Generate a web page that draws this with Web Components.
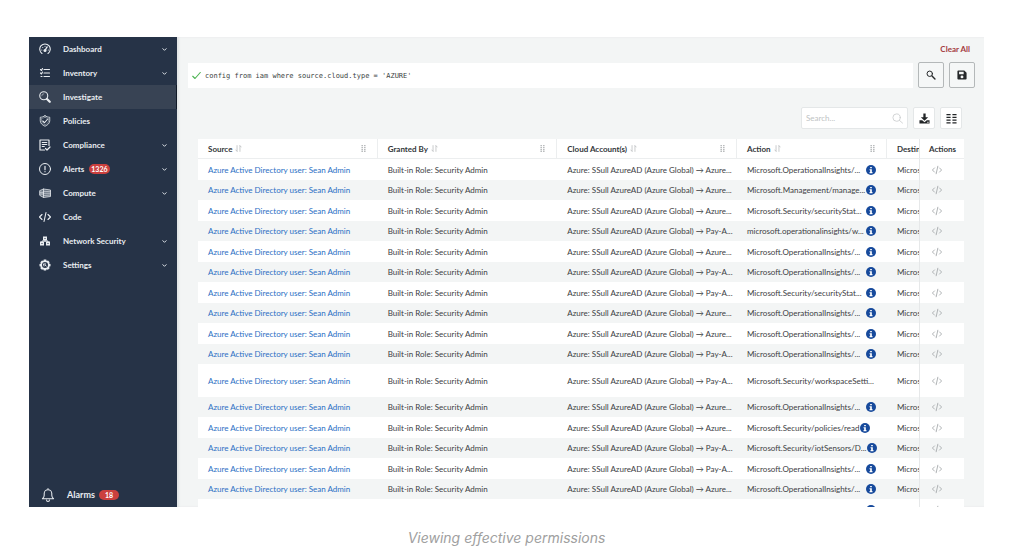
<!DOCTYPE html>
<html lang="en">
<head>
<meta charset="utf-8">
<title>Investigate</title>
<style>
    body {
        margin: 0;
        background: #fff;
        font-family: Lato, "Liberation Sans", sans-serif;
        font-size: 8px;
        color: #3c4043;
    }
</style>
</head>
<body>
<doc-figure>
    <app-shell>
        <side-nav slot="nav">
            <nav-item icon="gauge" more>Dashboard</nav-item>
            <nav-item icon="list" more>Inventory</nav-item>
            <nav-item icon="lens" active>Investigate</nav-item>
            <nav-item icon="shield">Policies</nav-item>
            <nav-item icon="report" more>Compliance</nav-item>
            <nav-item icon="alert" badge="1326" more>Alerts</nav-item>
            <nav-item icon="compute" more>Compute</nav-item>
            <nav-item icon="code">Code</nav-item>
            <nav-item icon="network" more>Network Security</nav-item>
            <nav-item icon="gear" more>Settings</nav-item>
            <nav-item slot="bottom" icon="bell" badge="18" large>Alarms</nav-item>
        </side-nav>
        <query-bar value="config from iam where source.cloud.type = 'AZURE'"></query-bar>
        <table-tools></table-tools>
        <access-table></access-table>
    </app-shell>
    <span slot="caption">Viewing effective permissions</span>
</doc-figure>

<script>
const line = 'fill="none" stroke="currentColor" stroke-linecap="round" stroke-linejoin="round"';

const icons = {
    gauge: `<g ${line} stroke-width="2.2"><path d="M6 21a10.500 10.500 0 1 1 12 0"/><path d="M12 15l4-7" stroke-width="3"/><path d="M5.500 14h.1M7.500 9h.1M12 6.500h.1M18.500 14h.1"/></g><circle cx="12" cy="15" r="3" fill="currentColor"/>`,
    list: `<g ${line} stroke-width="2.200"><path d="M10 5h11M10 12h11M10 19h11M3 5l2 2 2-4M3 12l2 2 2-4"/><path d="M4 19h2"/></g>`,
    lens: `<g ${line}><circle cx="9.500" cy="9.500" r="8" stroke-width="2.200"/><path d="M5.500 9.500a4 4 0 0 1 4-4" stroke-width="1"/><path d="M16 16l5.500 5.500" stroke-width="4.400"/></g>`,
    shield: `<g ${line} stroke-width="1.600"><path d="M12 1.500c3 2 6 2.800 9.500 3v7c0 5-4 8.500-9.500 11-5.500-2.500-9.500-6-9.500-11v-7c3.500-.2 6.500-1 9.500-3z"/><path d="M12 4.500c2.500 1.500 4.500 2 7 2.300v5c0 3.500-3 6-7 8-4-2-7-4.500-7-8v-5c2.500-.3 4.500-.8 7-2.300z" stroke-width=".8"/><path d="M7.500 12l3.500 3.500 6-7" stroke-width="2.200"/></g>`,
    report: `<g ${line} stroke-width="2.400"><path d="M11 22H2V2h18v11"/><path d="M6.500 7h9M6.500 11h9M6.500 15h4"/><path d="M13 19l3 3 6-6"/></g>`,
    alert: `<g ${line} stroke-width="2"><circle cx="12" cy="12" r="11"/><path d="M12 6.500v7M12 17v.3" stroke-width="2.400"/></g>`,
    compute: `<path d="M2 7l7-3 14 2v13l-14 2-7-4z" fill="currentColor" opacity=".35"/><g ${line} stroke-width="1.500"><path d="M2 7l7-3 14 2v13l-14 2-7-4zM9 4v17M2 10.500h7M2 14h7"/><path d="M9 8.500l14 1M9 12.500h14M9 17l14-1" stroke-width="1.200"/></g>`,
    code: `<g ${line} stroke-width="2.200"><path d="M6 7l-5 5 5 5M18 7l5 5-5 5M14 3l-4 18"/></g>`,
    network: `<g fill="currentColor"><path d="M8 3h8v8H8zM2 13h8v8H2zM14 13h8v8h-8z"/></g><path d="M12 11v2M6 14v-2h12v2" ${line} stroke-width="2"/><path d="M11 6h2v2h-2zM5 16h2v2H5zM17 16h2v2h-2z" fill="#263347"/>`,
    gear: `<path fill="currentColor" fill-rule="evenodd" d="M9.500 1h5l.8 3 2.800-1 3.200 3.500-1.300 2.700 3 .8v4.500l-3 1 1.300 3-3.500 3.200-2.700-1.300-.9 2.600h-4.600l-1-2.700-2.700 1.300-3.300-3.300 1.300-2.800-2.900-1V10l3-.8-1.300-2.700L6 3l2.700 1.100zM12 6a6 6 0 1 0 0 12 6 6 0 0 0 0-12z"/><path d="M12 8.500V12l2.500 2M9 10l1 4" ${line} stroke-width="2"/>`,
    bell: `<g ${line} stroke-width="1.800"><path d="M2.500 18.500c2-1.500 3-3.500 3-6V9.500a6.500 6.500 0 0 1 13 0v3c0 2.500 1 4.500 3 6zM12 1v2M9.500 20.500a2.500 2.500 0 0 0 5 0"/></g>`,
    chevron: `<path d="M4 8l8 8 8-8" ${line} stroke-width="4.500"/>`,
    check: `<path d="M2 14l6 6L22 4" ${line} stroke-width="3"/>`,
    search: `<g ${line}><circle cx="9" cy="9" r="6.500" stroke-width="2.400"/><path d="M14.500 14.500l7 7" stroke-width="3.400"/></g>`,
    find: `<g ${line} stroke-width="1.800"><circle cx="10" cy="10" r="8"/><path d="M16 16l7 6"/></g>`,
    save: `<path fill="currentColor" fill-rule="evenodd" d="M3 1h14.500L23 6.500V21a2 2 0 0 1-2 2H3a2 2 0 0 1-2-2V3a2 2 0 0 1 2-2zM5 4v6h11V4zM12 13a3.500 3.500 0 1 0 0 7 3.500 3.500 0 0 0 0-7z"/>`,
    download: `<path fill="currentColor" fill-rule="evenodd" d="M9.500 1h5v8H20l-8 8-8-8h5.500zM1 16h6l5 4 5-4h6v7H1zM18 19v2h3v-2z"/>`,
    columns: `<path fill="currentColor" d="M1 2h9v3H1zM14 2h9v3h-9zM1 8h9v3H1zM14 8h9v3h-9zM1 14h9v3H1zM14 14h9v3h-9zM1 20h9v3H1zM14 20h9v3h-9z"/>`,
    sort: `<path d="M7 2v19M2.500 17L7 21.500M17 22V3M21.500 7L17 2.500" ${line} stroke-width="2.400"/>`,
    grip: `<path fill="currentColor" d="M5 0h5v4H5zM14 0h5v4h-5zM5 7h5v4H5zM14 7h5v4h-5zM5 14h5v4H5zM14 14h5v4h-5zM5 20h5v4H5zM14 20h5v4h-5z"/>`,
    info: `<circle cx="12" cy="12" r="12" fill="#174a9c"/><path fill="#fff" d="M10 4.500h4V8h-4zM8.500 10H14v7h1.500v2.500h-7V17H10v-4.500H8.500z"/>`
};

class UiIcon extends HTMLElement {
    constructor() {
        super();
        this.attachShadow({ mode: 'open' });
    }

    connectedCallback() {
        this.shadowRoot.innerHTML = `
            <style>
            :host { display: inline-block; width: 12px; height: 12px; flex: none; }
            svg { display: block; width: 100%; height: 100%; }
            </style>
            <svg viewBox="0 0 24 24" aria-hidden="true">${icons[this.getAttribute('name')]}</svg>
        `;
    }
}
customElements.define('ui-icon', UiIcon);

class DocFigure extends HTMLElement {
    constructor() {
        super();
        this.attachShadow({ mode: 'open' }).innerHTML = `
            <style>
            :host { display: block; }
            figure {
                box-sizing: border-box;
                height: 100vh;
                margin: 0;
                padding: 37px 40px 0 29px;
                display: flex;
                flex-direction: column;
            }
            .view { flex: 1; min-height: 0; display: flex; }
            figcaption {
                height: 47px;
                padding-top: 22px;
                box-sizing: border-box;
                text-align: center;
                font: italic 14px/18px Inter, sans-serif;
                color: #a0a0a0;
            }
            </style>
            <figure>
                <div class="view"><slot></slot></div>
                <figcaption><slot name="caption"></slot></figcaption>
            </figure>
        `;
    }
}
customElements.define('doc-figure', DocFigure);

class AppShell extends HTMLElement {
    constructor() {
        super();
        this.attachShadow({ mode: 'open' }).innerHTML = `
            <style>
            :host { display: flex; flex: 1; min-width: 0; overflow: hidden; background: #f3f5f5; }
            main {
                flex: 1;
                min-width: 0;
                display: flex;
                flex-direction: column;
                box-shadow: inset 2px 0 2px #e2e5e6;
            }
            header { display: flex; justify-content: flex-end; padding: 7px 14px 8px; }
            a { color: #a33a40; font-size: 8px; line-height: 10px; font-weight: 700; text-decoration: none; }
            </style>
            <slot name="nav"></slot>
            <main>
                <header><a href="#clear">Clear All</a></header>
                <slot></slot>
            </main>
        `;
    }
}
customElements.define('app-shell', AppShell);

class SideNav extends HTMLElement {
    constructor() {
        super();
        this.attachShadow({ mode: 'open' }).innerHTML = `
            <style>
            :host { display: block; width: 148px; flex: none; background: #263347; color: #e9edf1; }
            nav { display: flex; flex-direction: column; height: 100%; }
            .bottom { margin-top: auto; }
            </style>
            <nav>
                <slot></slot>
                <div class="bottom"><slot name="bottom"></slot></div>
            </nav>
        `;
    }
}
customElements.define('side-nav', SideNav);

class NavItem extends HTMLElement {
    constructor() {
        super();
        this.attachShadow({ mode: 'open' });
    }

    connectedCallback() {
        const badge = this.getAttribute('badge');
        this.shadowRoot.innerHTML = `
            <style>
            :host { display: block; }
            a {
                display: flex;
                align-items: center;
                height: 24px;
                padding: 0 10px;
                color: inherit;
                font-size: 8px;
                line-height: 10px;
                font-weight: 700;
                text-decoration: none;
            }
            .icon { margin-right: 12px; }
            :host([active]) a { background: #384354; border-right: 1px solid #111a28; }
            :host([large]) a { padding-left: 12px; font-size: 9px; }
            :host([large]) .icon { width: 14px; height: 14px; }
            .badge {
                margin-left: 5px;
                padding: 0 2px;
                border-radius: 5px;
                background: #cb403e;
                color: #fff;
                font-size: 7px;
                line-height: 10px;
            }
            :host([large]) .badge { margin-left: 4px; padding: 0 6px; }
            .more { width: 5px; height: 5px; margin-left: auto; }
            </style>
            <a href="#">
                <ui-icon class="icon" name="${this.getAttribute('icon')}"></ui-icon>
                <slot></slot>
                ${badge ? `<span class="badge">${badge}</span>` : ''}
                ${this.hasAttribute('more') ? '<ui-icon class="more" name="chevron"></ui-icon>' : ''}
            </a>
        `;
    }
}
customElements.define('nav-item', NavItem);

class QueryBar extends HTMLElement {
    constructor() {
        super();
        this.attachShadow({ mode: 'open' }).innerHTML = `
            <style>
            :host { display: flex; gap: 5px; padding: 0 9px 0 11px; }
            label {
                flex: 1;
                display: flex;
                align-items: center;
                gap: 4px;
                margin-top: 1px;
                padding: 0 4px;
                background: #fff;
            }
            label ui-icon { width: 9px; height: 9px; color: #4eb453; }
            input {
                flex: 1;
                padding: 0;
                border: 0;
                outline: 0;
                background: none;
                color: #3b3f42;
                font: 7px/12px "DejaVu Sans Mono", monospace;
            }
            button {
                display: flex;
                align-items: center;
                justify-content: center;
                width: 26px;
                height: 26px;
                padding: 0;
                border: 1px solid #b4b8b9;
                border-radius: 2px;
                background: #f5f7f7;
                color: #25282a;
            }
            button ui-icon { width: 10px; height: 10px; }
            </style>
            <label><ui-icon name="check"></ui-icon><input type="text" aria-label="Query" spellcheck="false"></label>
            <button type="button" aria-label="Run query"><ui-icon name="search"></ui-icon></button>
            <button type="button" aria-label="Save query"><ui-icon name="save"></ui-icon></button>
        `;
    }

    connectedCallback() {
        this.shadowRoot.querySelector('input').value = this.getAttribute('value');
    }
}
customElements.define('query-bar', QueryBar);

class TableTools extends HTMLElement {
    constructor() {
        super();
        this.attachShadow({ mode: 'open' }).innerHTML = `
            <style>
            :host { display: flex; justify-content: flex-end; gap: 5px; padding: 19px 22px 10px; }
            label, button {
                box-sizing: border-box;
                display: flex;
                align-items: center;
                height: 22px;
                border: 1px solid #e4e7e8;
                border-radius: 2px;
                background: #fff;
            }
            label { width: 107px; padding: 0 4px; }
            label ui-icon { width: 11px; height: 11px; color: #c9cccd; }
            input {
                flex: 1;
                min-width: 0;
                padding: 0;
                border: 0;
                outline: 0;
                background: none;
                font: 8px/12px Lato, sans-serif;
            }
            input::placeholder { color: #c0c3c4; }
            button { justify-content: center; width: 22px; padding: 0; color: #222527; }
            button ui-icon { width: 11px; height: 11px; }
            </style>
            <label><input type="text" placeholder="Search..." aria-label="Search"><ui-icon name="find"></ui-icon></label>
            <button type="button" aria-label="Download"><ui-icon name="download"></ui-icon></button>
            <button type="button" aria-label="Columns"><ui-icon name="columns"></ui-icon></button>
        `;
    }
}
customElements.define('table-tools', TableTools);

// [cloud account, action, row style]
const rows = [
    ['Azure...', 'Microsoft.OperationalInsights/...'],
    ['Azure...', 'Microsoft.Management/manage...'],
    ['Azure...', 'Microsoft.Security/securityStat...'],
    ['Pay-A...', 'microsoft.operationalinsights/w...'],
    ['Azure...', 'Microsoft.OperationalInsights/...'],
    ['Pay-A...', 'Microsoft.OperationalInsights/...'],
    ['Pay-A...', 'Microsoft.Security/securityStat...'],
    ['Azure...', 'Microsoft.OperationalInsights/...'],
    ['Azure...', 'Microsoft.OperationalInsights/...'],
    ['Pay-A...', 'Microsoft.OperationalInsights/...'],
    ['Pay-A...', 'Microsoft.Security/workspaceSetti...', 'tall'],
    ['Azure...', 'Microsoft.OperationalInsights/...'],
    ['Azure...', 'Microsoft.Security/policies/read', 'short'],
    ['Pay-A...', 'Microsoft.Security/iotSensors/D...'],
    ['Pay-A...', 'Microsoft.OperationalInsights/...'],
    ['Azure...', 'Microsoft.OperationalInsights/...'],
    ['Azure...', 'Microsoft.Security/securityStat...']
];

class AccessTable extends HTMLElement {
    constructor() {
        super();
        this.attachShadow({ mode: 'open' });
    }

    _head(label) {
        return `<th scope="col"><div class="head">${label}<ui-icon name="sort"></ui-icon><ui-icon class="grip" name="grip"></ui-icon></div></th>`;
    }

    _row([account, action, style = '']) {
        return `
            <tr class="${style}">
                <td><a href="#">Azure Active Directory user: Sean Admin</a></td>
                <td>Built-in Role: Security Admin</td>
                <td>Azure: SSull AzureAD (Azure Global) → ${account}</td>
                <td><div class="action"><span>${action}</span>${style === 'tall' ? '' : '<ui-icon name="info"></ui-icon>'}</div></td>
                <td class="dest">Micros</td>
                <td class="end"><button type="button" aria-label="View"><ui-icon name="code"></ui-icon></button></td>
            </tr>
        `;
    }

    connectedCallback() {
        this.shadowRoot.innerHTML = `
            <style>
            :host { display: block; flex: 1; min-height: 0; overflow: hidden; padding: 0 20px 0 21px; }
            table { width: 100%; table-layout: fixed; border-collapse: separate; border-spacing: 0; background: #fff; }
            .c-action { width: 150px; }
            .c-dest { width: 32px; }
            .c-end { width: 45px; }
            th, td { padding: 0 10px; text-align: left; line-height: 10px; white-space: nowrap; overflow: hidden; }
            th {
                height: 20px;
                box-sizing: border-box;
                border-bottom: 1px solid #eceeef;
                border-right: 1px solid #eceeef;
                font-weight: 700;
                color: #33373a;
            }
            tbody tr { height: 21px; }
            tbody tr:nth-child(even) { height: 20px; background: #f3f5f5; }
            tbody tr.tall { height: 33px; }
            .head { display: flex; align-items: center; gap: 3px; }
            .head ui-icon { width: 7px; height: 7px; color: #b3b6b8; }
            .head .grip { margin-left: auto; }
            .action { display: flex; align-items: center; gap: 1px; }
            .action span { min-width: 118px; }
            .short .action span { min-width: 0; }
            .action ui-icon { width: 10px; height: 10px; }
            .dest { padding-right: 0; border-right: 0; }
            .end { border-left: 1px solid #e6e8e9; border-right: 0; padding-left: 9px; }
            td.end { padding: 0 12px; }
            a { color: #2b6fc4; text-decoration: none; }
            button { display: block; padding: 0; border: 0; background: none; color: #a9acae; }
            button ui-icon { display: block; width: 10px; height: 10px; }
            </style>
            <table>
                <colgroup><col><col><col><col class="c-action"><col class="c-dest"><col class="c-end"></colgroup>
                <thead>
                    <tr>
                        ${['Source', 'Granted By', 'Cloud Account(s)', 'Action'].map(this._head).join('')}
                        <th scope="col" class="dest">Destin</th>
                        <th scope="col" class="end">Actions</th>
                    </tr>
                </thead>
                <tbody>${rows.map(this._row).join('')}</tbody>
            </table>
        `;
    }
}
customElements.define('access-table', AccessTable);
</script>
</body>
</html>
